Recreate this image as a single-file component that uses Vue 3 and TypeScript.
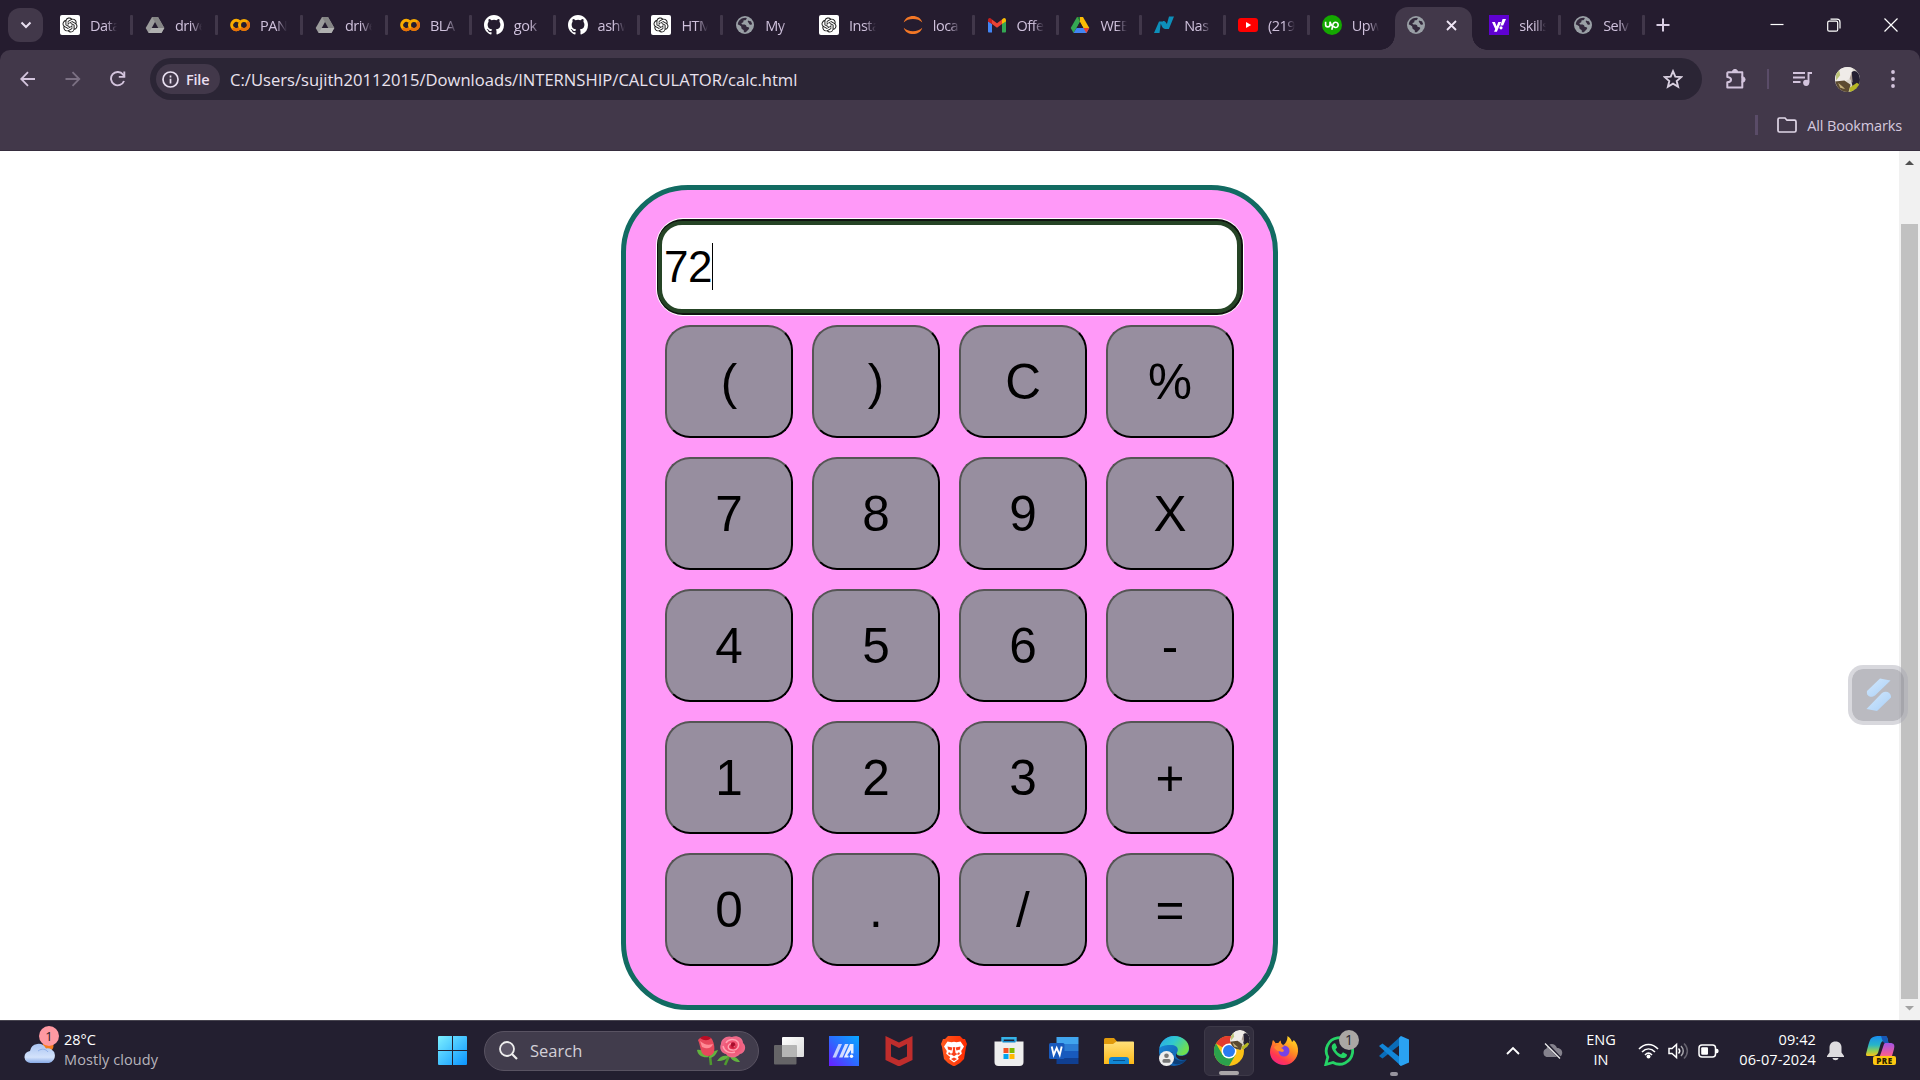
<script setup lang="ts">
import { ref } from 'vue'

interface Tab { icon: string; title: string; wide?: boolean; active?: boolean; sep?: boolean }

const tabs: Tab[] = [
  { icon: 'gpt', title: 'Data', wide: true, sep: true },
  { icon: 'driveGray', title: 'drive', wide: true, sep: true },
  { icon: 'colab', title: 'PAN', wide: true, sep: true },
  { icon: 'driveGray', title: 'drive', wide: true, sep: true },
  { icon: 'colab', title: 'BLA', sep: true },
  { icon: 'github', title: 'gok', sep: true },
  { icon: 'github', title: 'ashw', sep: true },
  { icon: 'gpt', title: 'HTM', sep: true },
  { icon: 'globe', title: 'My' },
  { icon: 'gpt', title: 'Insta' },
  { icon: 'jupyter', title: 'loca', sep: true },
  { icon: 'gmail', title: 'Offe', sep: true },
  { icon: 'drive', title: 'WEB', sep: true },
  { icon: 'nasdaq', title: 'Nas', sep: true },
  { icon: 'youtube', title: '(219', sep: true },
  { icon: 'upwork', title: 'Upw' },
  { icon: 'globe', title: '', active: true },
  { icon: 'yahoo', title: 'skills', sep: true },
  { icon: 'globe', title: 'Selv', sep: true },
]

const keys = ['(', ')', 'C', '%', '7', '8', '9', 'X', '4', '5', '6', '-', '1', '2', '3', '+', '0', '.', '/', '=']
const display = ref('72')

function press(k: string) {
  if (k === 'C') display.value = ''
  else if (k !== '=') display.value += k
}

const apps = ['taskview', 'myasus', 'mcafee', 'brave', 'store', 'word', 'explorer', 'edge', 'chrome', 'firefox', 'whatsapp', 'vscode']
</script>

<template>
  <div class="screen">
    <svg class="defs" width="0" height="0">
      <defs>
        <linearGradient id="gWin" x1="0" y1="0" x2="1" y2="1"><stop offset="0" stop-color="#7df0ff" /><stop offset="1" stop-color="#0a94ff" /></linearGradient>
        <linearGradient id="gCloud" x1="0" y1="0" x2="0" y2="1"><stop offset="0" stop-color="#a9c4f2" /><stop offset=".7" stop-color="#d3e2fb" /><stop offset="1" stop-color="#86a9e6" /></linearGradient>
        <linearGradient id="gAsus" x1="0" y1="1" x2="1" y2="0"><stop offset="0" stop-color="#6a1dff" /><stop offset=".5" stop-color="#2b6cff" /><stop offset="1" stop-color="#08a8ff" /></linearGradient>
        <linearGradient id="gTask" x1="0" y1="0" x2="1" y2="1"><stop offset="0" stop-color="#fff" /><stop offset="1" stop-color="#dcdcdc" /></linearGradient>
        <linearGradient id="gBrave" x1="0" y1="0" x2="1" y2="0"><stop offset="0" stop-color="#ff5a1f" /><stop offset="1" stop-color="#ff2a00" /></linearGradient>
        <linearGradient id="gFold" x1="0" y1="0" x2="0" y2="1"><stop offset="0" stop-color="#ffe07a" /><stop offset="1" stop-color="#fdb917" /></linearGradient>
        <linearGradient id="gEdge" x1="0" y1="0" x2="1" y2=".5"><stop offset="0" stop-color="#2aa5ea" /><stop offset=".5" stop-color="#30c8cf" /><stop offset="1" stop-color="#6fe04f" /></linearGradient>
        <linearGradient id="gEdge2" x1="0" y1="0" x2="1" y2="1"><stop offset="0" stop-color="#1b8fe0" /><stop offset="1" stop-color="#0b4f9e" /></linearGradient>
        <linearGradient id="gFox" x1=".8" y1="0" x2=".2" y2="1"><stop offset="0" stop-color="#ffe226" /><stop offset=".4" stop-color="#ff9020" /><stop offset=".75" stop-color="#ff3850" /><stop offset="1" stop-color="#f0208c" /></linearGradient>
        <linearGradient id="gCop" x1="0" y1="0" x2="0" y2="1"><stop offset="0" stop-color="#1a8cf0" /><stop offset=".45" stop-color="#27b5c8" /><stop offset=".75" stop-color="#93cf52" /><stop offset="1" stop-color="#fcc419" /></linearGradient>
        <linearGradient id="gCop2" x1="0" y1="0" x2="0" y2="1"><stop offset="0" stop-color="#a055e8" /><stop offset=".6" stop-color="#f05a9a" /><stop offset="1" stop-color="#ff8f5c" /></linearGradient>
        <linearGradient id="gBolt" x1="0" y1="0" x2="1" y2="1"><stop offset="0" stop-color="#d3e8fc" /><stop offset="1" stop-color="#a9d0f8" /></linearGradient>
        <radialGradient id="gRose"><stop offset="0" stop-color="#c40f2e" /><stop offset=".4" stop-color="#f2516f" /><stop offset="1" stop-color="#ee6b8c" /></radialGradient>
        <clipPath id="round"><circle cx="12" cy="12" r="12" /></clipPath>
      </defs>

      <symbol id="gpt" viewBox="0 0 20 20">
        <rect width="20" height="20" rx="2" fill="#fff" />
        <path transform="translate(2.500 2.500) scale(.625)" fill="#1c1c1c" d="M22.2819 9.8211a5.9847 5.9847 0 0 0-.5157-4.9108 6.0462 6.0462 0 0 0-6.5098-2.9A6.0651 6.0651 0 0 0 4.9807 4.1818a5.9847 5.9847 0 0 0-3.9977 2.9 6.0462 6.0462 0 0 0 .7427 7.0966 5.98 5.98 0 0 0 .511 4.9107 6.051 6.051 0 0 0 6.5146 2.9001A5.9847 5.9847 0 0 0 13.2599 24a6.0557 6.0557 0 0 0 5.7718-4.2058 5.9894 5.9894 0 0 0 3.9977-2.9001 6.0557 6.0557 0 0 0-.7475-7.0729zm-9.022 12.6081a4.4755 4.4755 0 0 1-2.8764-1.0408l.1419-.0804 4.7783-2.7582a.7948.7948 0 0 0 .3927-.6813v-6.7369l2.02 1.1686a.071.071 0 0 1 .038.052v5.5826a4.504 4.504 0 0 1-4.4945 4.4944zm-9.6607-4.1254a4.4708 4.4708 0 0 1-.5346-3.0137l.142.0852 4.783 2.7582a.7712.7712 0 0 0 .7806 0l5.8428-3.3685v2.3324a.0804.0804 0 0 1-.0332.0615L9.74 19.9502a4.4992 4.4992 0 0 1-6.1408-1.6464zM2.3408 7.8956a4.485 4.485 0 0 1 2.3655-1.9728V11.6a.7664.7664 0 0 0 .3879.6765l5.8144 3.3543-2.0201 1.1685a.0757.0757 0 0 1-.071 0l-4.8303-2.7865A4.504 4.504 0 0 1 2.3408 7.872zm16.5963 3.8558L13.1038 8.364 15.1192 7.2a.0757.0757 0 0 1 .071 0l4.8303 2.7913a4.4944 4.4944 0 0 1-.6765 8.1042v-5.6772a.79.79 0 0 0-.407-.667zm2.0107-3.0231l-.142-.0852-4.7735-2.7818a.7759.7759 0 0 0-.7854 0L9.409 9.2297V6.8974a.0662.0662 0 0 1 .0284-.0615l4.8303-2.7866a4.4992 4.4992 0 0 1 6.6802 4.66zM8.3065 12.863l-2.02-1.1638a.0804.0804 0 0 1-.038-.0567V6.0742a4.4992 4.4992 0 0 1 7.3757-3.4537l-.142.0805L8.704 5.459a.7948.7948 0 0 0-.3927.6813zm1.0976-2.3654l2.602-1.4998 2.6069 1.4998v2.9994l-2.5974 1.4997-2.6067-1.4997Z" />
      </symbol>
      <symbol id="driveGray" viewBox="0 0 20 20">
        <path d="M7 2h6l6.300 11-2.900 5H3.600L.7 13z" fill="#9b9b9b" /><path d="M7 2h6l6.300 11h-6z" fill="#858585" /><path d="M3.600 18l3-5h12.700l-2.900 5z" fill="#b0b0b0" /><path d="M10 7l3.300 6H6.700z" fill="#251c2f" />
      </symbol>
      <symbol id="drive" viewBox="0 0 20 20">
        <path d="M7 2L.7 13l2.900 5L10 7z" fill="#34a853" /><path d="M7 2h6l6.300 11h-6z" fill="#fbbc04" /><path d="M7 2h3v5z" fill="#188038" /><path d="M3.600 18l3-5h12.700l-2.900 5z" fill="#4285f4" /><path d="M13.300 13h6l-2.900 5z" fill="#ea4335" /><path d="M10 7l3.300 6H6.700z" fill="#251c2f" />
      </symbol>
      <symbol id="colab" viewBox="0 0 20 20">
        <g fill="none" stroke-width="3.100"><path d="M9.400 6.600A4.600 4.600 0 1 0 9.400 13.400" stroke="#f9ab00" /><circle cx="14" cy="10" r="4.500" stroke="#f9ab00" /><path d="M10.800 13.200A4.500 4.500 0 0 0 17.200 6.800" stroke="#e8710a" /><path d="M2.800 13.200A4.600 4.600 0 0 0 9.400 13.400" stroke="#e8710a" /></g>
      </symbol>
      <symbol id="github" viewBox="0 0 16 16">
        <path fill="#fff" d="M8 0C3.580 0 0 3.580 0 8c0 3.540 2.290 6.530 5.470 7.590.4.070.55-.17.55-.38 0-.19-.01-.82-.01-1.490-2.010.37-2.530-.49-2.690-.94-.09-.23-.48-.94-.82-1.130-.28-.15-.68-.52-.01-.53.63-.01 1.080.58 1.230.82.72 1.210 1.870.87 2.330.66.07-.52.28-.87.51-1.070-1.780-.2-3.640-.89-3.640-3.950 0-.87.31-1.590.82-2.150-.08-.2-.36-1.020.08-2.120 0 0 .67-.21 2.200.82a7.600 7.600 0 0 1 4 0c1.530-1.040 2.200-.82 2.200-.82.44 1.100.16 1.920.08 2.120.51.56.82 1.270.82 2.150 0 3.070-1.870 3.750-3.650 3.950.29.25.54.73.54 1.480 0 1.070-.01 1.930-.01 2.200 0 .21.15.46.55.38A8 8 0 0 0 16 8c0-4.420-3.580-8-8-8z" />
      </symbol>
      <symbol id="globe" viewBox="0 0 20 20">
        <circle cx="10" cy="10" r="9" fill="#9aa0a6" />
        <path d="M2.800 9.500C3 5.500 6.500 2.700 10.500 2.800L11.800 3c-.3 1.600-1 2.300-2.400 2.300-.8 0-1 .5-1 1.300 0 1-.8 1.300-1.900 1.300 0 1.200.6 1.500 1.700 1.500 2 0 3.200.4 3.200 1.900 0 .8.700.9 1.800.9 1.200 0 1.300.9.500 2l-2.900 3c-.4.200-1.200.1-2 0 .2-1.200 0-2.200-.9-2.600-1.100-.5-1.600-1.200-1.600-2.600 0-.9-1.400-1.900-3.500-2.500z" fill="#33293c" />
        <path d="M13 5.400c1 .1 1.800.9 3 .8l1.200 3.100c-1.300.9-2.900.5-3.200-.9-.2-1.200-1.900-1.300-1-3z" fill="#33293c" />
      </symbol>
      <symbol id="jupyter" viewBox="0 0 20 20">
        <path d="M.7 7.400C3-1.200 17-1.200 19.300 7.400 15 2.800 5 2.800.7 7.400zM.7 12.700c2.300 8.500 16.300 8.500 18.600 0-4.300 4.600-14.300 4.600-18.600 0z" fill="#f37726" />
      </symbol>
      <symbol id="gmail" viewBox="0 0 20 20">
        <path d="M1 6v10.500c0 .5.500 1 1 1h3V9z" fill="#4285f4" /><path d="M19 6v10.500c0 .5-.5 1-1 1h-3V9z" fill="#34a853" /><path d="M5 4.500l5 3.800 5-3.800V9l-5 3.800L5 9z" fill="#ea4335" /><path d="M1 5.500c0-2.500 2-3 3.200-1.700L5 4.500V9L1 6.500z" fill="#c5221f" /><path d="M19 5.500c0-2.500-2-3-3.200-1.700l-.8.700V9l4-2.500z" fill="#fbbc04" />
      </symbol>
      <symbol id="nasdaq" viewBox="0 0 20 20">
        <path d="M5 6.500h3.800l3.600 6.800-1.300.7c-2 0-3.300-2.400-4.300-5.500L5.500 18H0zM15 1.500h5L14.900 14h-3.800L8.500 8.200 9 6c2-.5 3 1.400 3.900 3z" fill="#0d8fba" />
      </symbol>
      <symbol id="youtube" viewBox="0 0 20 20"><rect y="3" width="20" height="14" rx="3" fill="#f00" /><path d="M8 7l5.200 3L8 13z" fill="#fff" /></symbol>
      <symbol id="upwork" viewBox="0 0 20 20">
        <circle cx="10" cy="10" r="10" fill="#14a800" />
        <g fill="none" stroke="#fff" stroke-width="1.600"><path d="M3.600 6.800v2.900a2.200 2.200 0 0 0 4.400 0V6.800c.6 2.300 1.700 4.200 3 5" /><path d="M9.800 14.800l1.300-5.700a2.600 2.600 0 1 1 .3 2.200" /></g>
      </symbol>
      <symbol id="yahoo" viewBox="0 0 20 20">
        <rect width="20" height="20" fill="#5f01d1" /><path d="M3 7h2.900l1.700 4.200L9.300 7h2.800l-4.200 9.700H5.100l1.100-2.600z" fill="#fff" /><path d="M13.600 4H17l-2.800 6.500h-2.800z" fill="#fff" /><circle cx="12" cy="12.800" r="1.600" fill="#fff" />
      </symbol>

      <symbol id="avatar" viewBox="0 0 24 24">
        <g clip-path="url(#round)"><rect width="24" height="24" fill="#d9d5cc" /><path d="M3 0h14v10L9 14H0V5z" fill="#efebe8" /><path d="M16 5c3-3 8 0 8 7v9l-6 2-2-8z" fill="#252032" /><path d="M0 14l9-1 6 4-2 7H4z" fill="#5b4a31" /><path d="M3 15l7 6-5-1z" fill="#c2ae78" /><path d="M14 20l7-5 3 2-2 7h-8z" fill="#b6b624" /><path d="M16 5l1 10-3-4z" fill="#ab9c92" /><path d="M1 6l3-3 1 5-4 5z" fill="#bdc47a" /></g>
      </symbol>

      <symbol id="taskview" viewBox="0 0 30 30"><rect x="8" y="1" width="22" height="20" rx="1" fill="url(#gTask)" /><rect y="9" width="22.500" height="19.500" rx="1" fill="#6e6e6e" opacity=".88" /><rect x="8" y="9" width="14.500" height="12" fill="#b5b5b5" /></symbol>
      <symbol id="myasus" viewBox="0 0 30 30"><rect width="30" height="30" fill="url(#gAsus)" /><path d="M9.500 8h3.500L7 21.500H3.500z" fill="#c3d0ff" /><path d="M16 8h3.500l-6 13.500H10z" fill="#d4deff" /><path d="M21 8h3.500v9.500H22V14l-4 5.500h1.500v2H14.800z" fill="#e6edff" /><circle cx="22.500" cy="20.300" r="1.700" fill="#fff" /></symbol>
      <symbol id="mcafee" viewBox="0 0 30 30"><path d="M1.500 0L15 6.500 28.500 0v24L15 30.500 1.500 24zM7 8v12.500l8 3.800 8-3.800V8l-8 4z" fill="#c02d2c" fill-rule="evenodd" /></symbol>
      <symbol id="brave" viewBox="0 0 30 30"><path d="M9 0h12l3 3h2l2 5-1 3-2 12-4 4-6 3.500L9 27l-4-4L3 11 2 8l2-5h2z" fill="url(#gBrave)" /><path d="M8.500 5.500l4 .8 2.500-.6 2.500.6 4-.8 3.500 5-2.800 4.500.6 2.800-4 3.200 1 2-4.800 3.500-4.800-3.500 1-2-4-3.200.6-2.800L5 10.500z" fill="#fff" /><path d="M8.500 10.500l5 1-1 3-3.500-1zM21.500 10.500l-5 1 1 3 3.500-1zM14.200 11h1.600l.7 6 2 1-3.500 2.200-3.500-2.200 2-1zM10 16l2 2-1 1-2-1zM20 16l-2 2 1 1 2-1zM12 23l3-1.500 3 1.500-3 2z" fill="#fb411b" /></symbol>
      <symbol id="store" viewBox="0 0 30 30"><path d="M8.500 7V2.200h13V7" fill="none" stroke="#35b3e8" stroke-width="2.400" /><path d="M.5 5.500h29V26a4 4 0 0 1-4 4h-21a4 4 0 0 1-4-4z" fill="#eee" /><path d="M8.500 5V6.500h13V5" fill="#1489cb" /><path d="M9.500 12h5v5h-5z" fill="#f25022" /><path d="M15.500 12h5v5h-5z" fill="#7fba00" /><path d="M9.500 18h5v5h-5z" fill="#00a4ef" /><path d="M15.500 18h5v5h-5z" fill="#ffb900" /></symbol>
      <symbol id="word" viewBox="0 0 30 30"><path d="M7.500 1h22v7h-22z" fill="#41a5ee" /><path d="M7.500 8h22v7h-22z" fill="#2b7cd3" /><path d="M7.500 15h22v7h-22z" fill="#185abd" /><path d="M7.500 22h22v6h-22z" fill="#103f91" /><rect y="7" width="15.500" height="16" rx="1.500" fill="#185abd" /><path d="M2.700 10.500l2 8.500L7.700 12l3 7 2-8.500" fill="none" stroke="#fff" stroke-width="1.900" /></symbol>
      <symbol id="explorer" viewBox="0 0 30 30"><path d="M0 3.500A1.500 1.500 0 0 1 1.500 2H10l3 3.500V10H0z" fill="#e09a0c" /><path d="M0 8h9l3.500-2.500H29a1 1 0 0 1 1 1V28H0z" fill="url(#gFold)" /><path d="M5 28v-4a3 3 0 0 1 3-3h14a3 3 0 0 1 3 3v4z" fill="#1187d4" /><path d="M9 24.500h12" stroke="#07508b" /></symbol>
      <symbol id="edge" viewBox="0 0 30 30"><circle cx="15" cy="15" r="15" fill="url(#gEdge2)" /><path d="M.5 12C1.500 5 8 0 15 0c9 0 15 6 15 12 0 5-4 7.500-8 7.500-4 0-5-1.500-4-3 2-3 .5-7-5-7.500C7 8.500 2 10 .5 12z" fill="url(#gEdge)" /><path d="M13.500 16c-.5 4 2.500 7.500 7 8.500 3 .6 6-.4 7.800-1.500-4 6-13 7-17 2-3-4-1-7.500 2.200-9z" fill="#0d3f78" /><path d="M18 17c-.8 2 1 3 4 3 4 0 7-2 8-5v7c-1 .8-4 2.600-8 1.800-4-.8-6.500-4-4-6.800z" fill="#231f30" /><circle cx="7.500" cy="22.500" r="7.500" fill="#eee" /><circle cx="7.500" cy="19.700" r="2.300" fill="#777" /><rect x="3.500" y="23" width="8" height="3.800" rx="1.500" fill="#777" /></symbol>
      <symbol id="chrome" viewBox="0 0 30 30"><circle cx="15" cy="15" r="15" fill="#fbc116" /><path d="M15 15L2 7.500A15 15 0 0 1 28 7.500H15z" fill="#e33b2e" /><path d="M2 7.500A15 15 0 0 0 15 30l6.500-11.300L15 15 8.500 18.700z" fill="#2ba24c" /><circle cx="15" cy="15" r="7.500" fill="#fff" /><circle cx="15" cy="15" r="6" fill="#2a7bf0" /></symbol>
      <symbol id="firefox" viewBox="0 0 30 30"><path d="M18.500 0c3 2 4 4 4.500 6 .8-.5 1.500-1.300 1.800-2C28 7 29.300 11 29 15.500 28.500 23 22.500 29 15 29S1 23.500 1 16c0-4 1.500-6 2-8 .3-1.500.3-2.500 1-4 1 .8 2 2 2.500 3.300 1-.4 2-.4 3-.2.300-1 1-2 2.300-2.600-.2 2 .7 3.500 2.400 4.500 2-1 4.300-4 4.300-9z" fill="url(#gFox)" /><circle cx="15" cy="15" r="5.500" fill="#7542e5" /><path d="M5 11c3-3 8-2.500 10-.5l-3 1.500c2.500 1 3.500 2.500 2.500 3.500-2 1-3-.3-4.800-.3-1.700-.2-4-2-4.700-4.200z" fill="#ff8a2d" /></symbol>
      <symbol id="whatsapp" viewBox="0 0 30 30"><path d="M1.800 28.500l2-7.300A13.200 13.200 0 1 1 9 26.500z" fill="none" stroke="#25d366" stroke-width="2.800" /><path d="M9.800 7.500c-3 1.600-2.500 5 0 8.200 2.500 3.400 6 6.300 9.400 6.300 2.500 0 4.500-2.300 3.500-3.800l-3.700-1.900-2 2.200c-2.700-1-4.400-2.700-5.500-5l1.600-2-1.600-3.700c-.3-.5-.9-.7-1.700-.3z" fill="#25d366" /></symbol>
      <symbol id="vscode" viewBox="0 0 30 30"><path d="M0 20l22-20v8L3.500 22.500z" fill="#0a6cb8" /><path d="M0 10l3.500-2.500L22 22v8z" fill="#1286d8" /><path d="M22 0l8 3.500v23L22 30l-2-1.500V2z" fill="#2aa2f2" /></symbol>
    </svg>

    <header class="tabstrip">
      <button class="tabsearch" aria-label="Search tabs"><svg width="14" height="14" viewBox="0 0 14 14"><path d="M2.500 4.500L7 9l4.500-4.500" fill="none" stroke="#e8dff0" stroke-width="2" /></svg></button>
      <div class="tabs">
        <div v-for="(t, i) in tabs" :key="i" class="tab" :class="{ wide: t.wide, active: t.active }">
          <svg class="fav" width="20" height="20"><use :href="'#' + t.icon" /></svg>
          <span v-if="!t.active" class="title">{{ t.title }}</span>
          <svg v-else class="close" width="11" height="11" viewBox="0 0 11 11"><path d="M1 1l9 9M10 1l-9 9" stroke="#efe6f5" stroke-width="1.800" /></svg>
          <i v-if="t.sep" class="sep" />
        </div>
      </div>
      <svg class="plus" width="14" height="14" viewBox="0 0 14 14"><path d="M7 .5v13M.5 7h13" stroke="#d9cde3" stroke-width="2" /></svg>
      <div class="winctl">
        <svg width="14" height="14" viewBox="0 0 14 14"><path d="M.5 6.500h13" stroke="#fff" stroke-width="1.200" /></svg>
        <svg width="14" height="14" viewBox="0 0 14 14" fill="none" stroke="#fff" stroke-width="1.200"><rect x=".7" y="3.200" width="10" height="10" rx="1.500" /><path d="M3.500 1.200h6.500a3 3 0 0 1 3 3v6.300" /></svg>
        <svg width="14" height="14" viewBox="0 0 14 14"><path d="M.5.5l13 13M13.500.5l-13 13" stroke="#fff" stroke-width="1.200" /></svg>
      </div>
    </header>

    <div class="chrome">
      <div class="toolbar">
        <svg class="nav" width="16" height="16" viewBox="0 0 16 16"><path d="M8 1.200L1.200 8 8 14.800M1.500 8H15" fill="none" stroke="#d3c4dd" stroke-width="1.800" /></svg>
        <svg class="nav" width="16" height="16" viewBox="0 0 16 16"><path d="M7.500 1.200L14.300 8l-6.800 6.800M14 8H.5" fill="none" stroke="#7b7083" stroke-width="1.800" /></svg>
        <svg class="nav" width="16" height="16" viewBox="0 0 16 16"><path d="M14 10A6.700 6.700 0 1 1 13 3.500L14.500 5.700" fill="none" stroke="#d3c4dd" stroke-width="1.900" /><path d="M14.300.5v5.400H8.800" fill="none" stroke="#d3c4dd" stroke-width="1.900" /></svg>
        <div class="omnibox">
          <div class="chip">
            <svg width="17" height="17" viewBox="0 0 17 17"><circle cx="8.500" cy="8.500" r="7.500" fill="none" stroke="#e8dff0" stroke-width="1.700" /><path d="M8.500 7.700v4.800M8.500 4.600v1.800" stroke="#e8dff0" stroke-width="1.700" /></svg>
            <span>File</span>
          </div>
          <span class="url">C:/Users/sujith20112015/Downloads/INTERNSHIP/CALCULATOR/calc.html</span>
          <svg class="star" width="20" height="20" viewBox="0 0 20 20"><path d="M10 2.200l2.300 5.400 5.900.5-4.500 3.900 1.400 5.700L10 14.700l-5.100 3 1.400-5.700L1.800 8.100l5.900-.5z" fill="none" stroke="#d9d0e0" stroke-width="1.900" /></svg>
        </div>
        <svg class="ext" width="22" height="22" viewBox="0 0 22 22"><path d="M2.300 4.200h15v5.200M17.300 13.500v6h-15v-5.200c5-.5 5-4.700 0-5.200V4.200" fill="none" stroke="#d3c4dd" stroke-width="2" stroke-linejoin="round" /><path d="M7.400 4a2.600 2.600 0 0 1 5.200 0zM17.500 8.900a2.600 2.600 0 0 1 0 5.200z" fill="#d3c4dd" stroke="#d3c4dd" /><path d="M17.300 8.500v6" stroke="#d3c4dd" stroke-width="2" /></svg>
        <i class="vline" />
        <svg class="media" width="19" height="16" viewBox="0 0 19 16"><path d="M0 2h12M0 6.500h12M0 11h7.500M15.500 11.500V2H19" fill="none" stroke="#d3c4dd" stroke-width="1.900" /><circle cx="13.200" cy="11.800" r="3.100" fill="#d3c4dd" /></svg>
        <svg class="profile" width="25" height="25"><use href="#avatar" /></svg>
        <svg class="dots" width="4" height="18" viewBox="0 0 4 18" fill="#d3c4dd"><circle cx="2" cy="2" r="1.900" /><circle cx="2" cy="9" r="1.900" /><circle cx="2" cy="16" r="1.900" /></svg>
      </div>
      <div class="bookmarks">
        <i class="bline" />
        <svg width="20" height="16" viewBox="0 0 20 16"><path d="M1 2.500C1 1.500 1.500 1 2.500 1H8l2 2.200h7.500c1 0 1.500.5 1.500 1.500v8.800c0 1-.5 1.500-1.500 1.500h-15C1.500 15 1 14.500 1 13.500z" fill="none" stroke="#e0d6e7" stroke-width="1.700" /></svg>
        <span>All Bookmarks</span>
      </div>
    </div>

    <main class="page">
      <section class="calc">
        <div class="focus"><div class="ring"><div class="display"><span>{{ display }}</span><i class="caret" /></div></div></div>
        <div class="keys"><button v-for="k in keys" :key="k" class="key" @click="press(k)">{{ k }}</button></div>
      </section>
      <div class="scrollbar">
        <svg width="21" height="21" viewBox="0 0 21 21"><path d="M6 14l4.500-4.500L15 14z" fill="#505050" /></svg>
        <div class="thumb" />
        <svg width="21" height="21" viewBox="0 0 21 21"><path d="M6 7h9l-4.500 4.500z" fill="#a3a3a3" /></svg>
      </div>
      <div class="float">
        <svg width="25" height="34" viewBox="0 0 25 34"><path d="M14 .5L24.500 2.500 9 17.500C4 21 0 17 1 13z" fill="url(#gBolt)" /><path d="M11 33L.5 31 16 15c4-3 9.500-.5 9 4.500z" fill="url(#gBolt)" /></svg>
      </div>
    </main>

    <footer class="taskbar">
      <div class="weather">
        <div class="wicon">
          <svg width="32" height="22" viewBox="0 0 32 22"><circle cx="24" cy="4" r="5.500" fill="#f47b1f" /><path d="M7 21a6 6 0 0 1-1-12 8.500 8.500 0 0 1 16-2.500A7 7 0 0 1 25 21z" fill="url(#gCloud)" /><path d="M14 9c4-3 8-2 10 1" fill="none" stroke="#8fb0ea" /></svg>
          <b class="wbadge">1</b>
        </div>
        <div class="wtext"><span>28°C</span><span class="dim">Mostly cloudy</span></div>
      </div>
      <svg class="start" width="29" height="29" viewBox="0 0 29 29"><path d="M0 1a1 1 0 0 1 1-1h13v14H0zM15 0h13a1 1 0 0 1 1 1v13H15zM0 15h14v14H1a1 1 0 0 1-1-1zM15 15h14v13a1 1 0 0 1-1 1H15z" fill="url(#gWin)" /></svg>
      <div class="search">
        <svg width="19" height="19" viewBox="0 0 19 19"><circle cx="8" cy="8" r="7" fill="#5b5566" stroke="#eee" stroke-width="1.800" /><path d="M13 13l5 5" stroke="#eee" stroke-width="2.200" /></svg>
        <span>Search</span>
        <svg class="roses" width="49" height="30" viewBox="0 0 49 30">
          <path d="M14 29l-1-9M28 29l4-9" stroke="#4f9a2f" stroke-width="2.500" /><path d="M0 14c4-1 9 2 12 7-6 1-11-1-12-7zM21 14c-2 5-5 8-9 8 1-4 4-7 9-8zM20 25c3-5 7-6 11-5 0 3-5 5-11 5zM43 26c-3-5-6-6-10-6 1 4 5 6 10 6z" fill="#62b33f" />
          <path d="M1 4c3-4 9-4 13-2 3 3 4 10 3 14-2 5-9 5-12 1C3 13 3 8 1 4z" fill="#e7485c" /><path d="M3 2c4-3 8-2 11 0-3 3-7 3-11 0z" fill="#b90d25" /><path d="M3 5c4 3 7 5 13 3-2 5-6 5-11 3z" fill="#ff8b96" />
          <path d="M24 8c0-5 6-9 11-7 5-2 11 1 11 6 4 3 2 10-3 11-4 5-12 4-14 0-5-1-7-6-5-10z" fill="url(#gRose)" /><path d="M29 7c2-4 9-5 12-1 2 4-1 9-6 8-4 0-5-4-2-6 3-1 5 1 4 3M26 10c1 5 6 8 12 6" fill="none" stroke="#ffa2b3" stroke-width="1.400" /><circle cx="36" cy="8.500" r="2.200" fill="#a80e2d" />
        </svg>
      </div>
      <nav class="apps">
        <div v-for="a in apps" :key="a" class="app" :class="{ current: a === 'chrome' }">
          <svg width="30" height="30"><use :href="'#' + a" /></svg>
          <svg v-if="a === 'chrome'" class="abadge pic" width="20" height="20"><use href="#avatar" /></svg>
          <b v-if="a === 'whatsapp'" class="abadge num">1</b>
          <i v-if="a === 'chrome' || a === 'vscode'" class="run" />
        </div>
      </nav>
      <div class="tray">
        <svg class="chev" width="14" height="9" viewBox="0 0 14 9"><path d="M1 8l6-6 6 6" fill="none" stroke="#fff" stroke-width="1.900" /></svg>
        <svg class="od" width="21" height="18" viewBox="0 0 21 18"><path d="M4.500 15a4.500 4.500 0 0 1 0-8.500C5.500 1 13 0 15 6c7 0 6.500 9 1.500 9z" fill="#85828d" /><path d="M4 1l14 15" stroke="#231f30" stroke-width="3" /><path d="M3 1.500l15 15" stroke="#f0f0f0" stroke-width="1.300" /></svg>
        <div class="lang"><span>ENG</span><span>IN</span></div>
        <svg class="wifi" width="21" height="16" viewBox="0 0 21 16"><g fill="none" stroke="#fff" stroke-width="1.600"><path d="M1 6c5.500-6 13.500-6 19 0M4 9c4-4 9-4 13 0M7 12c2.500-2.500 4.500-2.500 7 0" /></g><circle cx="10.500" cy="13.500" r="2" fill="#fff" /></svg>
        <svg class="vol" width="21" height="18" viewBox="0 0 21 18" fill="none" stroke="#fff" stroke-width="1.500"><path d="M1 6.500h3l4.500-4v13l-4.500-4H1zM10.500 6.500c1.500 1.500 1.500 3.500 0 5" /><path d="M13 4c3 3 3 7 0 10" opacity=".6" /><path d="M16 1.500c4.500 4.500 4.500 10.500 0 15" opacity=".3" /></svg>
        <svg class="bat" width="21" height="14" viewBox="0 0 21 14"><rect x="1" y="1" width="16.500" height="12" rx="3" fill="none" stroke="#fff" stroke-width="1.500" /><rect x="3.200" y="3.200" width="6.800" height="7.600" rx="1" fill="#fff" /><path d="M18.500 5l1.500.7v2.600l-1.500.7z" fill="#fff" stroke="#fff" /></svg>
        <div class="clock"><span>09:42</span><span>06-07-2024</span></div>
        <svg class="bell" width="17" height="20" viewBox="0 0 17 20"><path d="M8.500.5c4 0 6 2.700 6 6v5L17 15v1H0v-1l2.500-3.500v-5c0-3.300 2-6 6-6zM5.500 17h6c-.5 3-5.500 3-6 0z" fill="#dedcdf" /></svg>
        <div class="copilot">
          <svg width="30" height="30" viewBox="0 0 30 30"><path d="M0 18C2 11 3 5 5 2.500 7 .5 10 0 14 0h5c2 0 2.500 1.500 3 5h-4c-2 0-3 1-4 5l-2 7c-1 2-3 3-5 3H2c-2 0-2.400-1-2-2z" fill="url(#gCop)" /><path d="M18 8c1-2 3-1 6-1 4 0 5 2 4 6l-2 7c-1 3-3 5-6 5h-5c-2 0-2-3 0-8z" fill="url(#gCop2)" /><path d="M15 0h4c2 0 2.500 1.500 3 5l1 2h-3c-2 0-3 0-5-7z" fill="#1757b5" /></svg>
          <b>PRE</b>
        </div>
      </div>
    </footer>
  </div>
</template>

<style>
html, body { margin: 0; overflow: hidden; }
</style>

<style scoped>
* { box-sizing: border-box; }
.screen { width: 1920px; height: 1080px; display: flex; flex-direction: column; overflow: hidden; background: #251c2f; font-family: "Open Sans", "Noto Sans", sans-serif; position: relative; }
.defs { position: absolute; }
svg { display: block; flex: none; }
button { font: inherit; padding: 0; border: 0; }

.tabstrip { height: 50px; flex: none; display: flex; align-items: center; background: #251c2f; }
.tabsearch { width: 35px; height: 34px; margin-left: 8px; border-radius: 12px; background: #42384a; display: flex; align-items: center; justify-content: center; }
.tabs { display: flex; height: 50px; margin-left: 6px; flex: none; }
.tab { width: 83.8px; height: 50px; padding-left: 11px; display: flex; align-items: center; position: relative; flex: none; }
.tab.wide { width: 85px; }
.fav { position: relative; }
.title { width: 27px; margin-left: 10px; overflow: hidden; white-space: nowrap; font-size: 14.500px; letter-spacing: -.5px; line-height: 22px; padding-top: 1px; color: #cfc1dc; -webkit-mask-image: linear-gradient(90deg, #000 60%, transparent); mask-image: linear-gradient(90deg, #000 60%, transparent); }
.sep { width: 3px; height: 20px; border-radius: 1px; margin-left: 12px; background: #41374a; }
.wide .sep { margin-left: 13px; }
.tab.active::before { content: ""; position: absolute; left: 0; top: 7px; width: 77px; height: 43px; border-radius: 13px 13px 0 0; background: #42384a; }
.tab.active::after { content: ""; position: absolute; left: -15px; bottom: 0; width: 107px; height: 15px; background: radial-gradient(circle at 0 0, transparent 14.500px, #42384a 15px) left / 15px 15px no-repeat, radial-gradient(circle at 100% 0, transparent 14.500px, #42384a 15px) right / 15px 15px no-repeat; }
.close { position: relative; margin-left: 20px; }
.plus { margin-left: 10px; }
.winctl { display: flex; gap: 43px; margin-left: auto; margin-right: 22px; }

.chrome { height: 101px; flex: none; background: #42384a; border-radius: 10px 10px 0 0; border-bottom: 1px solid #362d3e; }
.toolbar { height: 58px; display: flex; align-items: center; padding: 0 25px 0 20px; }
.nav { margin-right: 29px; }
.omnibox { width: 1552px; height: 42px; margin-left: -5px; border-radius: 21px; background: #2b2535; display: flex; align-items: center; padding: 0 19px 0 6px; flex: none; }
.chip { width: 64px; height: 30px; border-radius: 15px; background: #42384a; display: flex; align-items: center; gap: 7px; padding-left: 6px; color: #eadff0; font-size: 14.500px; font-weight: 600; letter-spacing: -.2px; }
.url { margin-left: 10px; font-size: 16.600px; color: #e9e2ee; white-space: nowrap; padding-top: 1px; }
.star { margin-left: auto; }
.ext { margin-left: 23px; }
.vline { width: 2px; height: 20px; margin-left: 20px; background: #5a4c68; }
.media { margin-left: 24px; }
.profile { margin-left: 23px; }
.dots { margin-left: auto; }
.bookmarks { display: flex; justify-content: flex-end; align-items: center; height: 34px; padding-right: 18px; color: #d5c9df; font-size: 14.500px; letter-spacing: -.15px; }
.bline { width: 3px; height: 20px; background: #5a4c68; }
.bookmarks svg { margin: 0 10px 0 19px; }

.page { flex: 1; background: #fff; position: relative; display: flex; justify-content: space-between; align-items: flex-start; }
.calc { width: 657px; height: 825px; margin: 34px 0 0 621px; border: 5px solid #126b62; border-radius: 67px; background: #ff99f8; padding: 28px 0 0 30px; }
.focus { width: 588px; height: 98px; border: 1px solid #fff; border-radius: 27px; background: #fff; }
.ring { height: 96px; border: solid #101410; border-width: 2px 2px 2px 1px; border-radius: 26px; background: #254425; }
.display { height: 92px; border: 4px solid #254425; border-radius: 24px; background: #fff; display: flex; align-items: center; padding: 0 0 1px 2px; font: 44px "Liberation Sans", Arial, sans-serif; color: #000; }
.display span { letter-spacing: -.4px; }
.caret { width: 1px; height: 47px; background: #000; }
.keys { display: grid; grid-template-columns: repeat(4, 128px); grid-auto-rows: 113px; gap: 19px; margin: 9px 0 0 9px; }
.key { border: 2px solid; border-color: #555 #000 #000 #555; border-radius: 25px; background: #978e9f; color: #000; font: 49.500px "Liberation Sans", Arial, sans-serif; }
.scrollbar { width: 21px; height: 869px; background: #f1f1f1; display: flex; flex-direction: column; align-items: center; }
.thumb { width: 17px; height: 775px; margin: 52px 0 0; background: #c1c1c1; }
.scrollbar svg:last-child { margin-top: auto; }
.float { position: absolute; left: 1848px; top: 514px; width: 60px; height: 60px; border: 4px solid rgba(168, 168, 180, .45); border-radius: 15px; background: rgba(150, 150, 160, .66); background-clip: padding-box; display: flex; align-items: center; justify-content: center; }

.taskbar { height: 60px; flex: none; border-top: 1px solid #47444f; background: #231f30; color: #fff; display: flex; align-items: center; font-size: 14.500px; }
.weather { width: 438px; display: flex; align-items: center; padding-left: 24px; flex: none; }
.wicon { position: relative; padding-top: 5px; }
.wbadge { position: absolute; left: 15px; top: -11px; width: 20px; height: 20px; border-radius: 50%; background: #ff99a2; color: #2b1c27; font-size: 13px; font-weight: 400; line-height: 20px; text-align: center; }
.wtext { margin-left: 8px; padding-bottom: 2px; display: flex; flex-direction: column; line-height: 20px; }
.dim { color: #b7b4bc; letter-spacing: .1px; }
.search { width: 275px; height: 40px; margin-left: 17px; border: 1px solid #595362; border-radius: 20px; background: #413c4c; display: flex; align-items: center; padding: 0 12px 0 14px; color: #d3d0d7; font-size: 16.500px; flex: none; }
.search span { margin-left: 12px; }
.roses { margin-left: auto; }
.apps { display: flex; margin-left: 2px; }
.app { width: 55px; height: 50px; display: flex; align-items: center; justify-content: center; position: relative; flex: none; }
.app.current { width: 50px; margin: 0 2.500px; border: 1px solid #3d3948; border-radius: 6px; background: #322e3e; }
.abadge { position: absolute; border-radius: 50%; width: 20px; height: 20px; }
.pic { left: 25px; top: 3px; }
.num { left: 28px; top: 4px; background: #aaa7a4; color: #29252c; font-size: 14px; font-weight: 400; line-height: 20px; text-align: center; }
.run { position: absolute; bottom: 0; width: 8px; height: 4px; border-radius: 2px; background: #98949f; }
.current .run { width: 20px; background: #aaa6a8; bottom: 0; }
.tray { margin-left: auto; padding-right: 24px; display: flex; align-items: center; }
.od { margin-left: 22px; }
.lang { width: 40px; margin-left: 18px; padding-bottom: 1px; display: flex; flex-direction: column; align-items: center; line-height: 20px; }
.wifi { margin-left: 17px; }
.vol { margin-left: 9px; }
.bat { margin-left: 9px; }
.clock { width: 97px; padding-bottom: 2px; display: flex; flex-direction: column; align-items: flex-end; line-height: 20px; white-space: nowrap; letter-spacing: .1px; }
.bell { margin-left: 11px; }
.copilot { margin-left: 22px; position: relative; }
.copilot b { position: absolute; left: 7px; top: 20px; width: 23px; height: 9px; border-radius: 2px; background: #fdc811; color: #2b2100; font-size: 8px; font-weight: 800; line-height: 9px; text-align: center; letter-spacing: .5px; }
</style>
